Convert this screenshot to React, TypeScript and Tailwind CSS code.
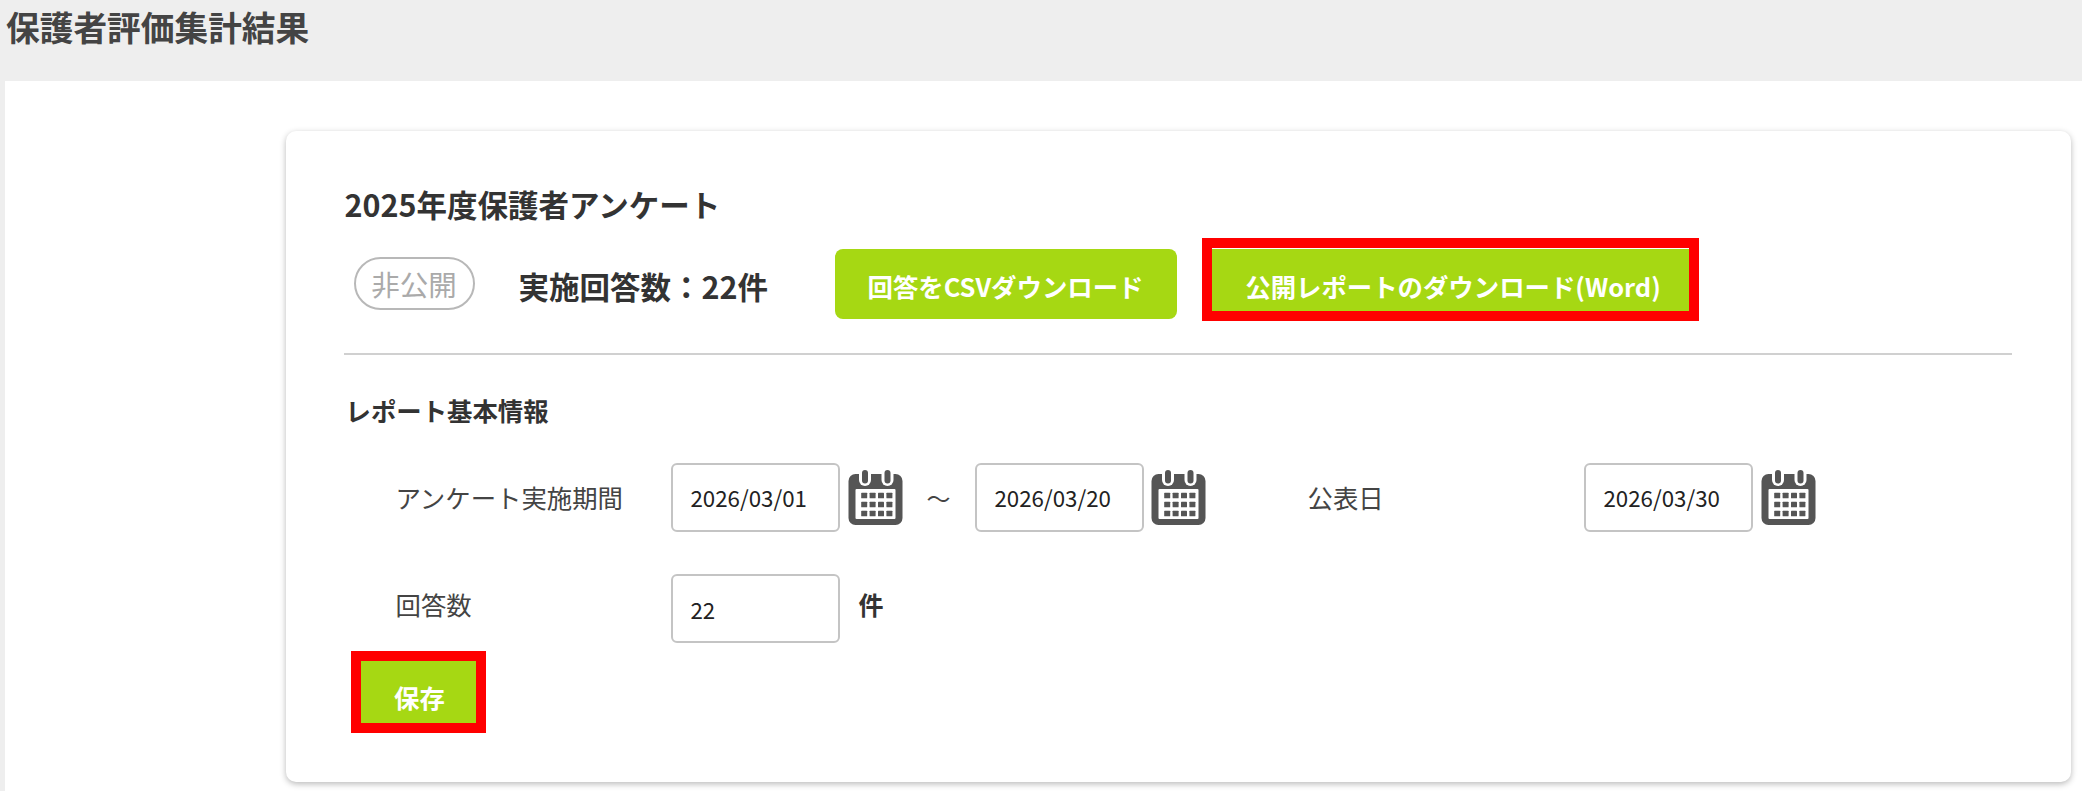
import React from "react";

function CalendarIcon() {
  const cells: React.ReactNode[] = [];
  for (let r = 0; r < 3; r++) {
    for (let c = 0; c < 4; c++) {
      cells.push(<rect key={`${r}-${c}`} x={12.7 + c * 8.4} y={22.7 + r * 9} width="6" height="5.6" rx="0.6" fill="#555" />);
    }
  }
  return (
    <svg width="55" height="55" viewBox="0 0 54 55" className="shrink-0">
      <path d="M7 4h40a7 7 0 0 1 7 7v37a7 7 0 0 1-7 7H7a7 7 0 0 1-7-7V11a7 7 0 0 1 7-7z" fill="#555" />
      <rect x="7" y="19" width="40" height="30" rx="1" fill="#fff" />
      <rect x="10.5" y="-2" width="12" height="18" rx="6" fill="#fff" />
      <rect x="33" y="-2" width="12" height="18" rx="6" fill="#fff" />
      <rect x="13.5" y="0" width="6" height="13.5" rx="3" fill="#555" />
      <rect x="36" y="0" width="6" height="13.5" rx="3" fill="#555" />
      {cells}
    </svg>
  );
}

function DateInput({ value }: { value: string }) {
  return (
    <div className="w-[169px] h-[69px] shrink-0 flex items-center pl-[18px] bg-white border-2 border-[#c4c4c4] rounded-[6px] text-[22.3px] text-[#222]">
      {value}
    </div>
  );
}

export default function App() {
  return (
    <div className="min-h-screen bg-[#eeeeee] font-['Noto_Sans_CJK_JP','Noto_Sans',sans-serif] text-[#333]">
      <header className="h-[81px] pl-[6px] pt-[7px]">
        <h1 className="text-[33.7px] leading-[40px] font-bold text-[#444]">保護者評価集計結果</h1>
      </header>
      <main className="ml-[5px] bg-white pt-[50px] pb-[9px] pl-[280.5px] pr-[11px] h-[710px]">
        <section className="bg-white rounded-[10px] shadow-[0_2px_6px_rgba(0,0,0,0.28)] pt-[55px] pl-[58px] pr-[59px] pb-[51px]">
          <h2 className="h-[38px] pl-[1px] flex items-center text-[30.5px] font-bold text-[#333]">2025年度保護者アンケート</h2>
          <div className="mt-[25px] h-[70px] flex items-center">
            <span className="ml-[10px] w-[121px] h-[53px] mt-[-2px] pt-[2px] flex items-center justify-center rounded-[27px] border-2 border-[#b8b8b8] text-[28.5px] text-[#aaa]">非公開</span>
            <span className="ml-[44px] w-[316px] pt-[6px] text-[30.5px] font-bold text-[#333]">実施回答数：22件</span>
            <button className="w-[342px] h-[70px] pt-[4px] rounded-[8px] bg-[#a6d813] text-white text-[25.4px] font-bold">回答をCSVダウンロード</button>
            <div className="relative ml-[25px]">
              <button className="w-[497px] h-[70px] pt-[4px] rounded-[8px] bg-[#a6d813] text-white text-[25.4px] font-bold pl-[6px]">公開レポートのダウンロード(Word)</button>
              <div className="absolute left-0 top-[-11px] w-[497px] h-[83px] border-[10px] border-[#ff0000]" />
            </div>
          </div>
          <div className="mt-[34px] h-[2px] bg-[#d0d0d0]" />
          <h3 className="mt-[37px] h-[36px] pl-[2px] flex items-center text-[25.4px] font-bold text-[#333]">レポート基本情報</h3>
          <div className="mt-[35px] flex items-center pl-[52px] h-[69px]">
            <span className="w-[275px] shrink-0 text-[25.4px] text-[#444]">アンケート実施期間</span>
            <DateInput value="2026/03/01" />
            <span className="ml-[8px]"><CalendarIcon /></span>
            <span className="ml-[24px] w-[48px] shrink-0 text-[24px] text-[#444]">〜</span>
            <DateInput value="2026/03/20" />
            <span className="ml-[7px]"><CalendarIcon /></span>
            <span className="ml-[102px] w-[276px] shrink-0 text-[25.4px] text-[#444]">公表日</span>
            <DateInput value="2026/03/30" />
            <span className="ml-[8px]"><CalendarIcon /></span>
          </div>
          <div className="mt-[42px] flex items-center pl-[52px] h-[69px]">
            <span className="w-[275px] shrink-0 text-[25.4px] text-[#444] pb-[8px]">回答数</span>
            <div className="w-[169px] h-[69px] shrink-0 flex items-center pl-[18px] pt-[3px] bg-white border-2 border-[#c4c4c4] rounded-[6px] text-[22.3px] text-[#222]">22</div>
            <span className="ml-[19px] text-[25px] font-bold text-[#333] pb-[8px]">件</span>
          </div>
          <div className="relative mt-[18px] ml-[7px] w-[135px] h-[70px]">
            <button className="w-[135px] h-[70px] pt-[2px] pl-[3px] rounded-[8px] bg-[#a6d813] text-white text-[25.4px] font-bold">保存</button>
            <div className="absolute left-0 top-[-10px] w-[135px] h-[82px] border-[10px] border-[#ff0000]" />
          </div>
        </section>
      </main>
    </div>
  );
}
